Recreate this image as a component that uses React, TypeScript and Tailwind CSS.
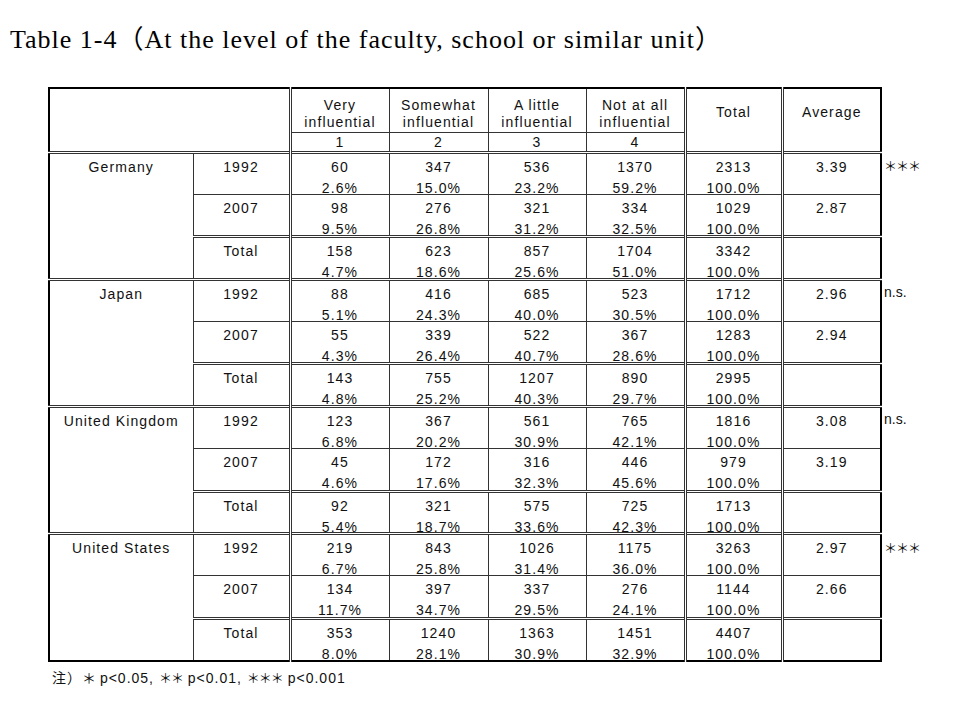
const FONT = "font-['Liberation_Sans','Noto_Sans_CJK_JP',sans-serif]";

// border pieces for the collapsed table
const L_OUTER = "[border-left:2px_solid_#000]";
const L_SINGLE = "[border-left:1px_solid_#333]";
const L_DOUBLE = "[border-left:3px_double_#333]";
const R_OUTER = "[border-right:2px_solid_#000]";
const T_OUTER = "[border-top:2px_solid_#000]";
const T_SINGLE = "[border-top:1px_solid_#333]";
const T_DOUBLE = "[border-top:3px_double_#333]";
const B_OUTER = "[border-bottom:2px_solid_#000]";

const leftFor = [L_OUTER, L_SINGLE, L_DOUBLE, L_SINGLE, L_SINGLE, L_SINGLE, L_DOUBLE, L_DOUBLE];

type Row = {
  label: string;
  cells: [string, string][];
  total: [string, string];
  avg?: string;
  note?: string;
};

type Country = { name: string; rows: Row[] };

const data: Country[] = [
  {
    name: "Germany",
    rows: [
      { label: "1992", cells: [["60", "2.6%"], ["347", "15.0%"], ["536", "23.2%"], ["1370", "59.2%"]], total: ["2313", "100.0%"], avg: "3.39", note: "***" },
      { label: "2007", cells: [["98", "9.5%"], ["276", "26.8%"], ["321", "31.2%"], ["334", "32.5%"]], total: ["1029", "100.0%"], avg: "2.87" },
      { label: "Total", cells: [["158", "4.7%"], ["623", "18.6%"], ["857", "25.6%"], ["1704", "51.0%"]], total: ["3342", "100.0%"] },
    ],
  },
  {
    name: "Japan",
    rows: [
      { label: "1992", cells: [["88", "5.1%"], ["416", "24.3%"], ["685", "40.0%"], ["523", "30.5%"]], total: ["1712", "100.0%"], avg: "2.96", note: "n.s." },
      { label: "2007", cells: [["55", "4.3%"], ["339", "26.4%"], ["522", "40.7%"], ["367", "28.6%"]], total: ["1283", "100.0%"], avg: "2.94" },
      { label: "Total", cells: [["143", "4.8%"], ["755", "25.2%"], ["1207", "40.3%"], ["890", "29.7%"]], total: ["2995", "100.0%"] },
    ],
  },
  {
    name: "United Kingdom",
    rows: [
      { label: "1992", cells: [["123", "6.8%"], ["367", "20.2%"], ["561", "30.9%"], ["765", "42.1%"]], total: ["1816", "100.0%"], avg: "3.08", note: "n.s." },
      { label: "2007", cells: [["45", "4.6%"], ["172", "17.6%"], ["316", "32.3%"], ["446", "45.6%"]], total: ["979", "100.0%"], avg: "3.19" },
      { label: "Total", cells: [["92", "5.4%"], ["321", "18.7%"], ["575", "33.6%"], ["725", "42.3%"]], total: ["1713", "100.0%"] },
    ],
  },
  {
    name: "United States",
    rows: [
      { label: "1992", cells: [["219", "6.7%"], ["843", "25.8%"], ["1026", "31.4%"], ["1175", "36.0%"]], total: ["3263", "100.0%"], avg: "2.97", note: "***" },
      { label: "2007", cells: [["134", "11.7%"], ["397", "34.7%"], ["337", "29.5%"], ["276", "24.1%"]], total: ["1144", "100.0%"], avg: "2.66" },
      { label: "Total", cells: [["353", "8.0%"], ["1240", "28.1%"], ["1363", "30.9%"], ["1451", "32.9%"]], total: ["4407", "100.0%"] },
    ],
  },
];

const headers = [
  ["Very", "influential"],
  ["Somewhat", "influential"],
  ["A little", "influential"],
  ["Not at all", "influential"],
];

const cellBase = "p-0 align-top text-center font-normal";

// two stacked lines; the box is kept short so the row stays 42px high
function Pair({ a, b }: { a: string; b?: string }) {
  return (
    <div className="h-[36px] pt-[3px] leading-[21px]">
      <div>{a}</div>
      {b && <div>{b}</div>}
    </div>
  );
}

function Stars({ n, size = "text-[13px]" }: { n: number; size?: string }) {
  return (
    <span className={`${size} tracking-[-1px] font-['Noto_Sans_CJK_JP',sans-serif]`}>
      {"＊".repeat(n)}
    </span>
  );
}

export default function App() {
  return (
    <div className={`w-[960px] h-[720px] bg-white text-[#111] ${FONT}`}>
      <h1 className="pt-[25px] pl-[10px] leading-[30px] text-[26px] font-normal tracking-[1px] font-['Liberation_Serif','Noto_Sans_CJK_JP',serif] text-black">
        Table 1-4（At the level of the faculty, school or similar unit）
      </h1>

      <div className="mt-[32px] ml-[48px]">
        <table className="border-collapse table-fixed w-[892px] text-[14px] tracking-[1.1px]">
          <colgroup>
            <col className="w-[144px]" />
            <col className="w-[97px]" />
            <col className="w-[99px]" />
            <col className="w-[99px]" />
            <col className="w-[98px]" />
            <col className="w-[99px]" />
            <col className="w-[97px]" />
            <col className="w-[99px]" />
            <col className="w-[60px]" />
          </colgroup>
          <thead>
            <tr className="h-[44px]">
              <th colSpan={2} rowSpan={2} className={`${cellBase} ${L_OUTER} ${T_OUTER}`} />
              {headers.map((h, i) => (
                <th key={i} className={`${cellBase} ${leftFor[i + 2]} ${T_OUTER}`}>
                  <div className="h-[40px] pt-[8px] leading-[17px]">
                    <div>{h[0]}</div>
                    <div>{h[1]}</div>
                  </div>
                </th>
              ))}
              <th rowSpan={2} className={`${cellBase} ${L_DOUBLE} ${T_OUTER}`}>
                <div className="pt-[15px] leading-[17px]">Total</div>
              </th>
              <th rowSpan={2} className={`${cellBase} ${L_DOUBLE} ${T_OUTER} ${R_OUTER}`}>
                <div className="pt-[15px] leading-[17px]">Average</div>
              </th>
              <th rowSpan={2} className="p-0" />
            </tr>
            <tr className="h-[20px]">
              {[1, 2, 3, 4].map((n, i) => (
                <th key={n} className={`p-0 align-middle text-center font-normal leading-[18px] ${leftFor[i + 2]} ${T_SINGLE}`}>
                  {n}
                </th>
              ))}
            </tr>
          </thead>
          <tbody>
            {data.map((c, ci) =>
              c.rows.map((r, ri) => {
                const last = ci === data.length - 1 && ri === 2;
                const top = ri === 1 ? T_SINGLE : T_DOUBLE;
                const bottom = last ? B_OUTER : "";
                return (
                  <tr key={c.name + r.label} className="h-[42.4px]">
                    {ri === 0 && (
                      <td rowSpan={3} className={`${cellBase} ${L_OUTER} ${T_DOUBLE} ${ci === data.length - 1 ? B_OUTER : ""}`}>
                        <Pair a={c.name} />
                      </td>
                    )}
                    <td className={`${cellBase} ${L_SINGLE} ${top} ${bottom}`}>
                      <Pair a={r.label} />
                    </td>
                    {r.cells.map((v, i) => (
                      <td key={i} className={`${cellBase} ${leftFor[i + 2]} ${top} ${bottom}`}>
                        <Pair a={v[0]} b={v[1]} />
                      </td>
                    ))}
                    <td className={`${cellBase} ${L_DOUBLE} ${top} ${bottom}`}>
                      <Pair a={r.total[0]} b={r.total[1]} />
                    </td>
                    <td className={`${cellBase} ${L_DOUBLE} ${R_OUTER} ${top} ${bottom}`}>
                      {r.avg && <Pair a={r.avg} />}
                    </td>
                    <td className="p-0 pl-[2px] align-top text-left tracking-[0px]">
                      {r.note === "***" && (
                        <div className="h-[36px] pt-[3px] leading-[21px]">
                          <Stars n={3} />
                        </div>
                      )}
                      {r.note === "n.s." && <Pair a="n.s." />}
                    </td>
                  </tr>
                );
              })
            )}
          </tbody>
        </table>
        <p className="mt-[5px] ml-[4px] text-[14px] leading-[20px] tracking-[1px]">
          注）<Stars n={1} size="text-[14px]" /> p&lt;0.05, <Stars n={2} /> p&lt;0.01, <Stars n={3} /> p&lt;0.001
        </p>
      </div>
    </div>
  );
}
